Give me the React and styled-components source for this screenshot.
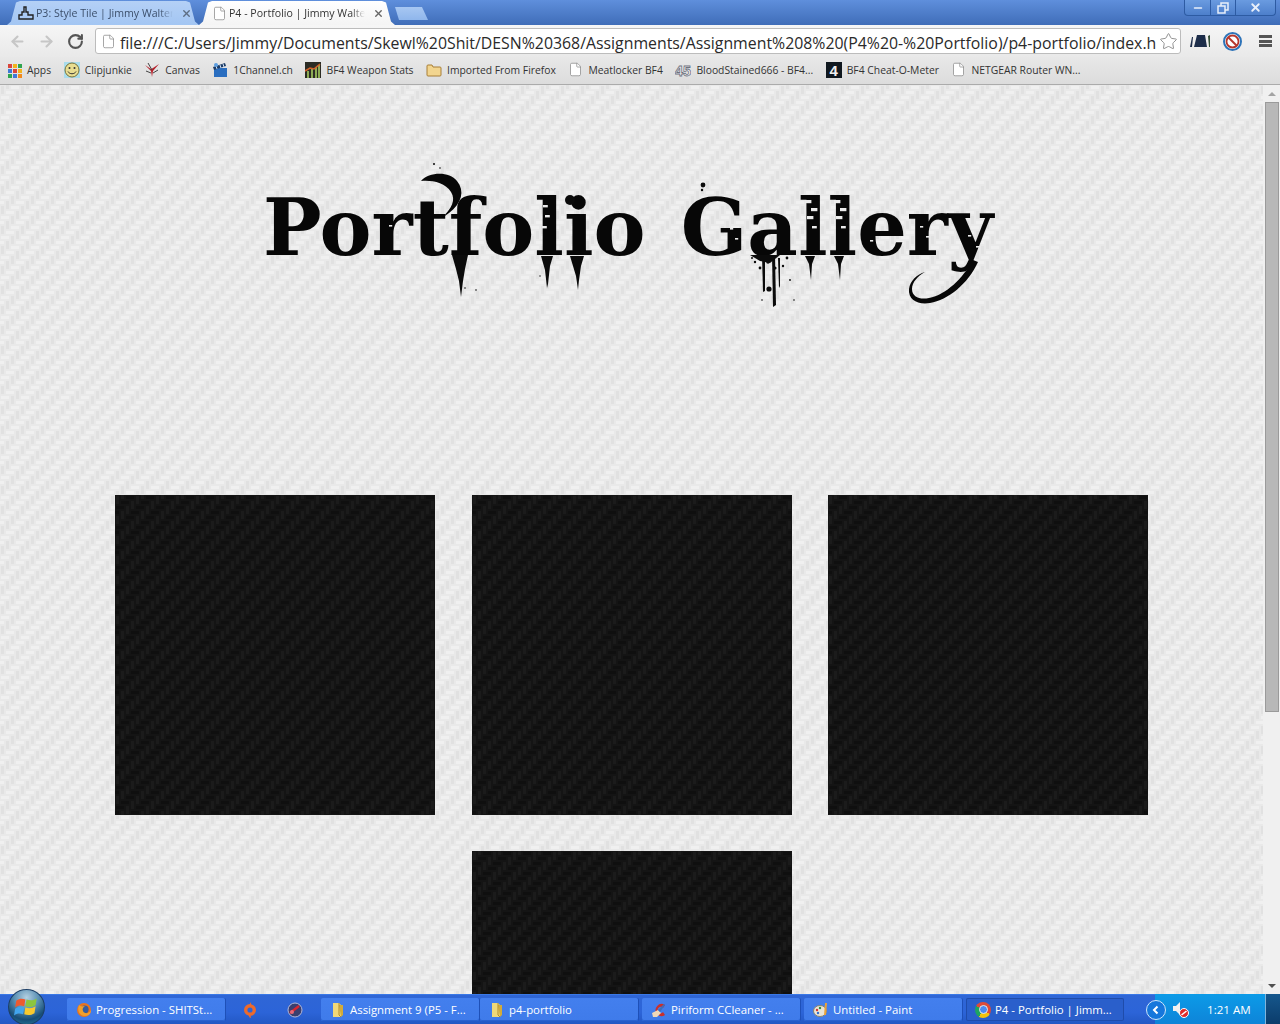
import React from 'react';
import styled, {createGlobalStyle} from 'styled-components';
import {ArrowLeft, ArrowRight, RotateCw, Star, File, X, Minus} from 'lucide-react';

const svgUri = (svg) => `url("data:image/svg+xml,${encodeURIComponent(svg)}")`;

// 2:1 herringbone tile, used for both the page and the dark squares
const weave = (base, up, flat) => svgUri(`<svg xmlns="http://www.w3.org/2000/svg" width="20" height="20">
<rect width="20" height="20" fill="${base}"/>
<g fill="${up}"><rect x="1" y="1" width="3" height="8"/><rect x="6" y="16" width="3" height="4"/><rect x="6" y="0" width="3" height="4"/><rect x="11" y="11" width="3" height="8"/><rect x="16" y="6" width="3" height="8"/></g>
<g fill="${flat}"><rect x="1" y="11" width="8" height="3"/><rect x="16" y="16" width="4" height="3"/><rect x="0" y="16" width="4" height="3"/><rect x="6" y="6" width="8" height="3"/><rect x="11" y="1" width="8" height="3"/></g>
</svg>`);

const GlobalStyle = createGlobalStyle`
  html, body {
    margin: 0;
    height: 100%;
    overflow: hidden;
  }
`;

const Screen = styled.div`
  width: 1280px;
  height: 1024px;
  display: flex;
  flex-direction: column;
  overflow: hidden;
  font-family: "Open Sans", "Liberation Sans", sans-serif;
`;

const TabStrip = styled.div`
  height: 25px;
  flex: none;
  display: flex;
  align-items: flex-end;
  padding-left: 7px;
  position: relative;
  background: linear-gradient(#5f8fdc, #3f6db8);
`;

const Tab = styled.div`
  width: ${p => p.$active ? 196 : 192}px;
  height: 24px;
  box-sizing: border-box;
  padding: 0 ${p => p.$active ? 11 : 7}px 0 ${p => p.$active ? 13 : 11}px;
  display: flex;
  align-items: center;
  gap: 2px;
  font-size: 10.6px;
  color: ${p => p.$active ? '#333' : '#3c4f6b'};
  background: ${p => p.$active ? 'linear-gradient(#fff, #f4f4f4)' : 'linear-gradient(#b4d0f6, #a3c6f3)'};
  clip-path: polygon(0 100%, 4px 85%, 9px 6%, 13px 0, calc(100% - 13px) 0, calc(100% - 9px) 6%, calc(100% - 4px) 85%, 100% 100%);
`;

const TabTitle = styled.span`
  flex: 1;
  overflow: hidden;
  white-space: nowrap;
  margin-right: 6px;
  mask-image: linear-gradient(to right, #000 90%, transparent);
`;

const NewTab = styled.div`
  width: 33px;
  height: 13px;
  margin: 0 0 5px 0;
  background: linear-gradient(#a7c7f2, #8fb6ec);
  clip-path: polygon(4px 100%, 0 0, 27px 0, 33px 100%);
`;

const WindowControls = styled.div`
  position: absolute;
  top: 0;
  right: 4px;
  width: 92px;
  height: 16px;
  display: grid;
  grid-template-columns: 25px 25px 1fr;
  box-sizing: border-box;
  border: 1px solid #2d5ba3;
  border-top: 0;
  border-radius: 0 0 4px 4px;
  background: linear-gradient(#6a9be0, #4d7fcb);
`;

const WindowButton = styled.div`
  display: flex;
  align-items: center;
  justify-content: center;
  color: #e8effa;
  & + & { border-left: 1px solid #2d5ba3; }
`;

const Toolbar = styled.div`
  height: 32px;
  flex: none;
  box-sizing: border-box;
  display: flex;
  align-items: center;
  padding: 0 8px 0 3px;
  background: linear-gradient(#f6f6f6, #e9e9e9);
`;

const NavButton = styled.div`
  width: 29px;
  flex: none;
  display: flex;
  justify-content: center;
  color: ${p => p.$dim ? '#c6c6c6' : '#555'};
`;

const Omnibox = styled.div`
  width: 1086px;
  height: 26px;
  margin-left: 5px;
  box-sizing: border-box;
  flex: none;
  display: flex;
  align-items: center;
  padding: 0 2px 0 5px;
  gap: 3px;
  background: #fff;
  border: 1px solid #bcbcbc;
  border-radius: 3px;
`;

const Url = styled.div`
  flex: 1;
  overflow: hidden;
  white-space: nowrap;
  padding: 3px 0 0 1px;
  font-size: 15.85px;
  color: #2a2a2a;
`;

const ToolIcons = styled.div`
  flex: 1;
  display: flex;
  align-items: center;
  justify-content: space-between;
  padding: 0 0 0 9px;
`;

const Hamburger = styled.div`
  width: 13px;
  height: 12px;
  border-top: 3px solid #555;
  border-bottom: 3px solid #555;
  box-sizing: border-box;
  position: relative;
  &::after {
    content: '';
    position: absolute;
    left: 0;
    right: 0;
    top: 1.5px;
    height: 3px;
    background: #555;
  }
`;

const BookmarkBar = styled.div`
  height: 28px;
  flex: none;
  box-sizing: border-box;
  display: flex;
  align-items: center;
  gap: 12.5px;
  padding: 0 0 2px 6px;
  background: linear-gradient(#e8e8e8, #dcdcdc);
  border-bottom: 1px solid #ababab;
`;

const Bookmark = styled.div`
  display: flex;
  align-items: center;
  gap: 5px;
  font-size: 10.35px;
  color: #333;
  white-space: nowrap;
`;

const Viewport = styled.div`
  flex: 1;
  min-height: 0;
  display: flex;
`;

const Page = styled.main`
  flex: 1;
  min-width: 0;
  overflow: hidden;
  background: ${weave('#e9e9e9', '#e1e1e1', '#f0f0f0')};
`;

const Hero = styled.header`
  height: 410px;
  box-sizing: border-box;
  padding: 97px 0 0 263px;
  position: relative;
`;

const Title = styled.h1`
  margin: 0;
  font-family: "DejaVu Serif", "Liberation Serif", serif;
  font-weight: 700;
  font-size: 78px;
  line-height: 92px;
  letter-spacing: 0px;
  word-spacing: 8px;
  white-space: nowrap;
  color: #070707;
`;

const Ornaments = styled.svg`
  position: absolute;
  left: 0;
  top: 0;
  pointer-events: none;
`;

const Gallery = styled.section`
  display: grid;
  grid-template-columns: repeat(3, 320px);
  column-gap: 36.5px;
  row-gap: 36px;
  padding-left: 115px;
`;

const Square = styled.div`
  height: 320px;
  grid-column: ${p => p.$column || 'auto'};
  background: ${weave('#141414', '#1b1b1b', '#0f0f0f')};
`;

const Scrollbar = styled.aside`
  width: 17px;
  flex: none;
  display: flex;
  flex-direction: column;
  align-items: center;
  background: #f0f0f0;
`;

const ScrollArrow = styled.div`
  height: 17px;
  flex: none;
  display: flex;
  align-items: center;
  &::before {
    content: '';
    border-left: 4px solid transparent;
    border-right: 4px solid transparent;
    ${p => p.$down ? 'border-top: 4px solid #505050;' : 'border-bottom: 4px solid #a3a3a3;'}
  }
`;

const ScrollThumb = styled.div`
  width: 14px;
  height: 610px;
  box-sizing: border-box;
  background: #b8b8b8;
  border: 1px solid #9a9a9a;
`;

const ScrollTrack = styled.div`
  flex: 1;
`;

const Taskbar = styled.footer`
  height: 30px;
  flex: none;
  display: flex;
  align-items: center;
  position: relative;
  padding-left: 67px;
  background: linear-gradient(#2f66d6 0, #2c64d8 60%, #2358c4 100%);
  border-top: 1px solid #3a78e6;
  box-sizing: border-box;
`;

const Orb = styled.div`
  position: absolute;
  left: 8px;
  top: -6px;
  width: 37px;
  height: 36px;
  display: flex;
  align-items: center;
  justify-content: center;
  border-radius: 50%;
  border: 1px solid #1d3f66;
  box-sizing: border-box;
  background: radial-gradient(circle at 50% 22%, #b4d0e2 0, #5a90b4 38%, #174d76 70%, #2a86a8 100%);
`;

const TaskButton = styled.div`
  width: 158px;
  height: 23px;
  flex: none;
  box-sizing: border-box;
  display: flex;
  align-items: center;
  gap: 4px;
  padding-left: 9px;
  border-radius: 2px;
  font-size: 11.4px;
  color: #fff;
  white-space: nowrap;
  background: ${p => p.$active ? '#2a5fcb' : 'linear-gradient(#437fee, #3f7bea)'};
  box-shadow: ${p => p.$active ? 'inset 0 0 0 1px #1f4caa' : 'inset 0 -1px 0 #2a62cf, 1px 0 0 #1e50b8'};
`;

const QuickLaunch = styled.div`
  width: 96px;
  flex: none;
  display: flex;
  align-items: center;
  justify-content: space-around;
  padding: 0 3px 0 2px;
  box-sizing: border-box;
`;

const TaskGroup = styled.div`
  display: flex;
  gap: ${p => p.$gap}px;
  margin-left: ${p => p.$inset || 0}px;
`;

const Tray = styled.div`
  position: absolute;
  right: 15px;
  top: -1px;
  bottom: 0;
  width: 110px;
  box-sizing: border-box;
  display: flex;
  align-items: center;
  padding-left: 17px;
  font-size: 11.6px;
  color: #fff;
  background: linear-gradient(#0c9be8, #0e84d8);
`;

const TrayToggle = styled.div`
  position: absolute;
  left: -9px;
  top: 6px;
  width: 18px;
  height: 18px;
  border-radius: 50%;
  border: 1px solid #cfe6fa;
  background: #1677dc;
  display: flex;
  align-items: center;
  justify-content: center;
`;

const Clock = styled.span`
  margin-left: 17px;
`;

const ShowDesktop = styled.div`
  position: absolute;
  right: 0;
  top: -1px;
  bottom: 0;
  width: 15px;
  box-sizing: border-box;
  background: linear-gradient(#16578c, #0b3c6b);
  border-left: 1px solid #7fb4dc;
`;

const ChromeDot = styled.span`
  width: 16px;
  height: 16px;
  flex: none;
  border-radius: 50%;
  display: flex;
  align-items: center;
  justify-content: center;
  background: conic-gradient(#dd4b39 0 120deg, #f4c20d 120deg 210deg, #1da462 210deg 300deg, #dd4b39 300deg);
  &::after {
    content: '';
    width: 7px;
    height: 7px;
    border-radius: 50%;
    background: #4a8af4;
    border: 1px solid #e8e8e8;
  }
`;

const BlockSlot = styled.span`
  display: flex;
  margin-right: 4px;
`;

const Icon = ({size = 16, children}) => (
    <svg width={size} height={size} viewBox="0 0 16 16" style={{flex: 'none'}}>{children}</svg>
);

const AppsIcon = () => (
    <Icon>
        {['#d9453b', '#f2b31c', '#2fa44f', '#3f78d8', '#d9453b', '#f2b31c', '#2fa44f', '#3f78d8', '#f08a1d'].map((c, i) => (
            <rect key={i} x={2 + (i % 3) * 5} y={2 + Math.floor(i / 3) * 5} width="4" height="4" fill={c}/>
        ))}
    </Icon>
);

const SmileyIcon = () => (
    <Icon>
        <rect width="16" height="16" fill="#a9dcec"/>
        <circle cx="8" cy="8" r="7" fill="#e8dd90" stroke="#77713a"/>
        <circle cx="5.5" cy="6" r="1" fill="#333"/>
        <circle cx="10.5" cy="6" r="1" fill="#333"/>
        <path d="M4 9.5c1.5 3 6.5 3 8 0" fill="none" stroke="#333"/>
    </Icon>
);

const CanvasIcon = () => (
    <Icon>
        <path d="M1 3l6 6 1 6 1-6 6-7-6 4-2 1z" fill="#b5222c"/>
        <path d="M2 9l5 2M14 8l-5 3M4 1l4 7" stroke="#444" fill="none"/>
    </Icon>
);

const ClapperIcon = () => (
    <Icon>
        <rect x="2" y="6" width="13" height="9" fill="#2a6ec0"/>
        <path d="M1 5l12-4 1 3-12 4z" fill="#1d3c66"/>
        <path d="M4 4l1 3M8 3l1 3M11 2l1 3" stroke="#cfe0f5"/>
        <circle cx="4" cy="3" r="2" fill="#5b9de0"/>
    </Icon>
);

const StatsIcon = () => (
    <Icon>
        <rect width="16" height="16" fill="#2c2c24"/>
        <path d="M2 16V9h2v7zM6 16V7h2v9zM10 16V5h2v11zM13 16V3h2v13z" fill="#8cab54"/>
        <path d="M0 9l5-3 4 1 6-5" stroke="#d2622a" strokeWidth="1.6" fill="none"/>
    </Icon>
);

const FolderIcon = () => (
    <Icon>
        <path d="M1 4a1 1 0 011-1h4l1 2h7a1 1 0 011 1v7a1 1 0 01-1 1H2a1 1 0 01-1-1z" fill="#f2d58f" stroke="#a87f36"/>
    </Icon>
);

const PageIcon = () => (
    <File size={15} color="#8a8a8a" strokeWidth={1.2} fill="#fff" style={{flex: 'none'}}/>
);

const BfIcon = () => (
    <Icon>
        <text x="0" y="14" fontFamily="Liberation Sans, sans-serif" fontWeight="700" fontSize="15" textLength="16" lengthAdjust="spacingAndGlyphs" fill="#f4f4f4" stroke="#6d7280" strokeWidth="0.8">45</text>
    </Icon>
);

const CheatIcon = () => (
    <Icon>
        <rect width="16" height="16" fill="#10181f"/>
        <text x="3.5" y="14" fontFamily="Liberation Sans, sans-serif" fontWeight="700" fontSize="15" fill="#f0f0f0">4</text>
    </Icon>
);

const TileIcon = () => (
    <Icon>
        <path d="M1 14V10h3V7h2V2h2v5h2v3h5v4z" fill="none" stroke="#222" strokeWidth="1.4"/>
    </Icon>
);

const ExtensionIcon = () => (
    <svg width="20" height="12" viewBox="0 0 20 12">
        <path d="M0 12L2 2h1L2 12zM4 12L7 0h8l2 12z" fill="#1d2d4a"/>
        <path d="M18 1l2-1v12h-1z" fill="#37513a"/>
    </svg>
);

const BlockIcon = () => (
    <svg width="19" height="19" viewBox="0 0 19 19">
        <circle cx="9.5" cy="9.5" r="8.5" fill="#fff" stroke="#2d73b8" strokeWidth="2"/>
        <circle cx="9.5" cy="9.5" r="6" fill="none" stroke="#b5362c" strokeWidth="1.8"/>
        <path d="M5.5 5.5l8 8" stroke="#b5362c" strokeWidth="2"/>
    </svg>
);

const FirefoxIcon = () => (
    <Icon>
        <circle cx="8" cy="8" r="7" fill="#e8731f"/>
        <circle cx="8.6" cy="7.6" r="4" fill="#345b9e"/>
        <path d="M3 3c-2 5 0 11 6 11 4 0 6-3 6-6-2 4-7 4-8 1-1-2 0-4 2-5-3 0-4 1-6-1z" fill="#f1a02b"/>
    </Icon>
);

const OriginIcon = () => (
    <Icon>
        <path d="M8 0l1.5 2.5A6 6 0 0 1 14 8a6 6 0 0 1-6 6 1 1 0 0 1 0 2l-1.5-2.5A6 6 0 0 1 2 8a6 6 0 0 1 6-6z" fill="#ec6a2c"/>
        <circle cx="8" cy="8" r="2.6" fill="#2c64d8"/>
    </Icon>
);

const GaugeIcon = () => (
    <Icon>
        <circle cx="8" cy="8" r="7" fill="#3a3f6e" stroke="#b4b8d8"/>
        <path d="M3 11l9-7" stroke="#d8252f" strokeWidth="2.4"/>
        <circle cx="5" cy="10" r="2" fill="#e66a78"/>
    </Icon>
);

const ManilaIcon = () => (
    <Icon>
        <path d="M3 1h6l2 2v12H3z" fill="#f0d878"/>
        <path d="M9 3h4v10l-2 2z" fill="#d2ab3a"/>
        <path d="M9 1v12l2 2" stroke="#b08a2a" fill="none"/>
    </Icon>
);

const CleanerIcon = () => (
    <Icon>
        <path d="M14 3a6 6 0 1 0 0 10l-2-3a3 3 0 1 1 0-4z" fill="#c9302c"/>
        <path d="M1 11l6-3 3 3-4 4H2z" fill="#f0d8b8"/>
        <path d="M7 8l6-6 1 1-5 7z" fill="#3b6fbd"/>
    </Icon>
);

const PaintIcon = () => (
    <Icon>
        <ellipse cx="7" cy="9" rx="6.5" ry="5.5" fill="#e8e4d8" stroke="#8a8470"/>
        <circle cx="4" cy="8" r="1.2" fill="#d8352f"/>
        <circle cx="7" cy="6" r="1.2" fill="#2f8a3f"/>
        <circle cx="5" cy="11" r="1.2" fill="#2f6fd0"/>
        <path d="M12 1l2 0-1 12-2 0z" fill="#e8a23a"/>
    </Icon>
);

const WindowsFlag = () => (
    <svg width="25" height="23" viewBox="0 0 22 20">
        <path d="M2 4c3-2 5-2 8-1l-1 6c-3-1-5-1-8 1z" fill="#ee5a2f"/>
        <path d="M11 3c3 1 6 1 9-1l-1 6c-3 2-6 2-9 1z" fill="#8cc63f"/>
        <path d="M1 11c3-2 5-2 8-1l-1 6c-3-1-5-1-8 1z" fill="#42a5ee"/>
        <path d="M10 10c3 1 6 1 9-1l-1 6c-3 2-6 2-9 1z" fill="#f9c92e"/>
    </svg>
);

const SpeakerIcon = () => (
    <svg width="18" height="18" viewBox="0 0 18 18">
        <path d="M1 6h3l4-4v13l-4-4H1z" fill="#f0f0f0"/>
        <circle cx="12" cy="13" r="4.5" fill="#e02a2a" stroke="#fff"/>
        <path d="M9.5 15l5-4" stroke="#fff" strokeWidth="1.6"/>
    </svg>
);

// the distressed bits of the title: swashes, drips and spatter, in page coordinates
const drips = [
    'M452 255l16 0-3 14-2 12-2 16-2-16-3-12z',
    'M541 256l12 0-3 10-2 18-1 4-2-18z',
    'M570 256l14 0-3 10-2 14-1 10-2-14-3-10z',
    'M805 256l10 0-3 8-1 16-2-16z',
    'M834 256l10 0-3 8-1 16-2-16z',
    'M762 255l3 0 0 36-2 1z',
    'M772 255l3 0 1 50-3 2z',
    'M778 258l2 0 0 28-1 2z',
    'M750 255l30 0-10 8-10-2z',
];

const splatter = [
    [769, 289, 2.6], [755, 262, 1.2], [760, 268, 1.4], [783, 266, 1.2], [752, 258, 1], [787, 258, 1.4], [768, 262, 1.8], [775, 268, 1.6], [790, 280, 0.9], [762, 300, 0.8],
    [434, 164, 1], [440, 168, 0.8], [570, 200, 5], [703, 185, 2.4], [702, 190, 1.2], [465, 288, 0.8], [476, 290, 0.8], [540, 276, 0.7], [794, 300, 0.8],
];

// background coloured flecks that eat into the letters
const flecks = [
    [543, 205, 3], [545, 215, 3], [542, 226, 3], [805, 200, 4], [811, 208, 4], [807, 216, 4], [812, 226, 3], [834, 200, 4], [840, 208, 4], [836, 216, 4], [841, 226, 3],
    [389, 225, 2], [395, 234, 2], [403, 220, 2], [730, 228, 2], [735, 238, 2], [870, 240, 2], [882, 244, 2], [920, 226, 2], [926, 236, 2], [968, 235, 2], [976, 246, 2],
];

const TitleOrnaments = () => (
    <Ornaments width="1263" height="400" viewBox="0 85 1263 400">
        <path d="M421 181c8-9 28-10 36 0 8 10 5 22-8 32l-7 5c10-10 14-18 9-26-6-10-20-12-30-11z" fill="#070707"/>
        <path d="M978 262c-10 22-30 38-48 41-12 2-22-3-21-14 1-8 8-15 16-17-7 4-13 10-13 17 0 8 8 11 17 9 17-3 34-20 44-38z" fill="#070707"/>
        {drips.map((d, i) => <path key={i} d={d} fill="#0b0b0b"/>)}
        {splatter.map(([x, y, r], i) => <circle key={i} cx={x} cy={y} r={r} fill="#0b0b0b"/>)}
        {flecks.map(([x, y, r], i) => <rect key={i} x={x} y={y} width={r * 1.6} height={r * 0.8} fill="#ececec"/>)}
    </Ornaments>
);

const bookmarks = [
    {icon: <AppsIcon/>, label: 'Apps'},
    {icon: <SmileyIcon/>, label: 'Clipjunkie'},
    {icon: <CanvasIcon/>, label: 'Canvas'},
    {icon: <ClapperIcon/>, label: '1Channel.ch'},
    {icon: <StatsIcon/>, label: 'BF4 Weapon Stats'},
    {icon: <FolderIcon/>, label: 'Imported From Firefox'},
    {icon: <PageIcon/>, label: 'Meatlocker BF4'},
    {icon: <BfIcon/>, label: 'BloodStained666 - BF4...'},
    {icon: <CheatIcon/>, label: 'BF4 Cheat-O-Meter'},
    {icon: <PageIcon/>, label: 'NETGEAR Router WN...'},
];

const url = 'file:///C:/Users/Jimmy/Documents/Skewl%20Shit/DESN%20368/Assignments/Assignment%208%20(P4%20-%20Portfolio)/p4-portfolio/index.html';

function App() {
    return <Screen>
        <GlobalStyle/>

        <TabStrip>
            <Tab>
                <TileIcon/>
                <TabTitle>P3: Style Tile | Jimmy Walters</TabTitle>
                <X size={11} strokeWidth={3} color="#5d6d82"/>
            </Tab>
            <Tab $active>
                <PageIcon/>
                <TabTitle>P4 - Portfolio | Jimmy Walters</TabTitle>
                <X size={11} strokeWidth={3} color="#666"/>
            </Tab>
            <NewTab/>
            <WindowControls>
                <WindowButton><Minus size={12} strokeWidth={3}/></WindowButton>
                <WindowButton>
                    <svg width="12" height="12" viewBox="0 0 12 12" fill="none" stroke="currentColor" strokeWidth="1.5">
                        <rect x="1" y="4" width="7" height="7"/>
                        <path d="M4 4V1h7v7H8"/>
                    </svg>
                </WindowButton>
                <WindowButton><X size={13} strokeWidth={3.5}/></WindowButton>
            </WindowControls>
        </TabStrip>

        <Toolbar>
            <NavButton $dim><ArrowLeft size={17} strokeWidth={3}/></NavButton>
            <NavButton $dim><ArrowRight size={17} strokeWidth={3}/></NavButton>
            <NavButton><RotateCw size={17} strokeWidth={3}/></NavButton>
            <Omnibox>
                <PageIcon/>
                <Url>{url}</Url>
                <Star size={19} color="#8d8d8d" strokeWidth={1.2}/>
            </Omnibox>
            <ToolIcons>
                <ExtensionIcon/>
                <BlockSlot><BlockIcon/></BlockSlot>
                <Hamburger/>
            </ToolIcons>
        </Toolbar>

        <BookmarkBar>
            {bookmarks.map((bookmark) => (
                <Bookmark key={bookmark.label}>{bookmark.icon}{bookmark.label}</Bookmark>
            ))}
        </BookmarkBar>

        <Viewport>
            <Page>
                <Hero>
                    <Title>Portfolio Gallery</Title>
                    <TitleOrnaments/>
                </Hero>
                <Gallery>
                    <Square/>
                    <Square/>
                    <Square/>
                    <Square $column={2}/>
                </Gallery>
            </Page>
            <Scrollbar>
                <ScrollArrow/>
                <ScrollThumb/>
                <ScrollTrack/>
                <ScrollArrow $down/>
            </Scrollbar>
        </Viewport>

        <Taskbar>
            <Orb><WindowsFlag/></Orb>
            <TaskButton><FirefoxIcon/>Progression - SHITSt...</TaskButton>
            <QuickLaunch>
                <OriginIcon/>
                <GaugeIcon/>
            </QuickLaunch>
            <TaskGroup $gap={1}>
                <TaskButton><ManilaIcon/>Assignment 9 (P5 - F...</TaskButton>
                <TaskButton><ManilaIcon/>p4-portfolio</TaskButton>
            </TaskGroup>
            <TaskGroup $gap={4} $inset={4}>
                <TaskButton><CleanerIcon/>Piriform CCleaner - ...</TaskButton>
                <TaskButton><PaintIcon/>Untitled - Paint</TaskButton>
                <TaskButton $active><ChromeDot/>P4 - Portfolio | Jimm...</TaskButton>
            </TaskGroup>
            <Tray>
                <TrayToggle>
                    <svg width="10" height="10" viewBox="0 0 10 10" fill="none" stroke="#fff" strokeWidth="2"><path d="M6.5 1.5L3 5l3.5 3.5"/></svg>
                </TrayToggle>
                <SpeakerIcon/>
                <Clock>1:21 AM</Clock>
            </Tray>
            <ShowDesktop/>
        </Taskbar>
    </Screen>;
}

export default App;
